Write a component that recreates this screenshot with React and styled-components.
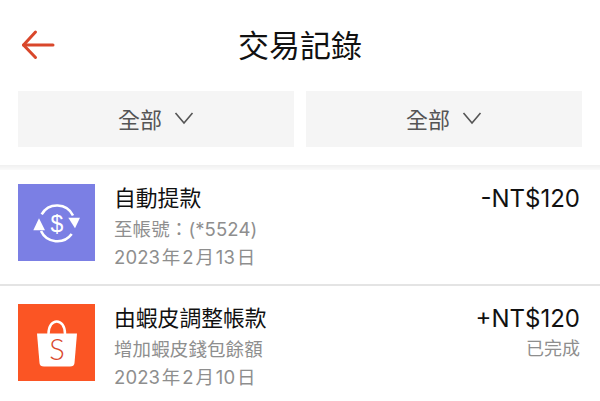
import styled, { createGlobalStyle } from "styled-components";

const GlobalStyle = createGlobalStyle`
  html, body {
    margin: 0;
    padding: 0;
    background: #fff;
  }
  body {
    width: 600px;
    height: 401px;
    overflow: hidden;
    font-family: Inter, "Noto Sans CJK TC", sans-serif;
  }
`;

const Page = styled.div`
  width: 600px;
  height: 401px;
  overflow: hidden;
  background: #fff;
`;

const Header = styled.header`
  position: relative;
  display: flex;
  align-items: center;
  justify-content: center;
  height: 91px;
`;

const BackButton = styled.button`
  position: absolute;
  left: 20px;
  top: 29px;
  display: flex;
  padding: 0;
  border: 0;
  background: none;
`;

const Title = styled.h1`
  margin: 0;
  font-size: 31px;
  line-height: 40px;
  font-weight: 400;
  color: #111;
`;

const Filters = styled.div`
  display: grid;
  grid-template-columns: 276px 276px;
  gap: 12px;
  padding: 0 18px;
`;

const Filter = styled.div`
  display: flex;
  align-items: center;
  justify-content: center;
  gap: 12px;
  height: 56px;
  padding-bottom: 3px;
  box-sizing: border-box;
  background: #f5f5f5;
  color: #555;
  font-size: 22px;
`;

const Band = styled.div`
  height: 5px;
  margin-top: 18px;
  background: linear-gradient(#f0f0f0, #fafafa);
`;

const List = styled.div`
  display: flex;
  flex-direction: column;
  gap: 4px;
`;

const Row = styled.div`
  display: flex;
  gap: 19px;
  height: 116px;
  padding: 14px 20px 0 18px;
  box-sizing: border-box;
  border-bottom: ${(props) => (props.$last ? "none" : "2px solid #e4e4e4")};
`;

const IconBox = styled.div`
  flex: none;
  display: flex;
  align-items: center;
  justify-content: center;
  width: 77px;
  height: 77px;
  background: ${(props) => props.$color};
`;

const Info = styled.div`
  flex: 1;
  display: flex;
  flex-direction: column;
`;

const RowTitle = styled.div`
  font-size: 21.8px;
  line-height: 28px;
  margin-bottom: 3px;
  color: #111;
`;

const Sub = styled.div`
  font-size: 18.5px;
  line-height: 28px;
  letter-spacing: 0.1px;
  color: #8e8e8e;
`;

const Side = styled.div`
  display: flex;
  flex-direction: column;
  align-items: flex-end;
`;

const Amount = styled.div`
  font-size: 24px;
  line-height: 30px;
  color: #111;
`;

const Status = styled.div`
  font-size: 18px;
  line-height: 30px;
  color: #8e8e8e;
`;

const Chevron = () => (
  <svg width="20" height="14" viewBox="0 0 20 14" fill="none" stroke="#555" strokeWidth="1.6">
    <path d="M1.5 2 L10 12 L18.5 2" />
  </svg>
);

const BackArrow = () => (
  <svg width="36" height="32" viewBox="0 0 36 32" fill="none" stroke="#d9472b" strokeWidth="3" strokeLinecap="round" strokeLinejoin="round">
    <path d="M3.5 16 H33" />
    <path d="M15.5 3 L3.5 16 L15.5 28.5" />
  </svg>
);

const RefundIcon = () => (
  <svg width="48" height="44" viewBox="0 0 48 44" fill="none">
    <path d="M8.7 13.3 A17.8 17.8 0 0 1 40 14.5" stroke="#fff" strokeWidth="2.6" />
    <path d="M8 30 A18 18 0 0 0 38.7 33" stroke="#fff" strokeWidth="2.6" />
    <path d="M35.3 16.7 L47 16.7 L42 27.3 Z" fill="#fff" />
    <path d="M0.3 29.3 L12 29.3 L6 17.3 Z" fill="#fff" />
    <text x="24" y="30.5" textAnchor="middle" fontFamily="Liberation Sans" fontSize="23" fill="#fff">$</text>
  </svg>
);

const BagIcon = () => (
  <svg width="42" height="50" viewBox="0 0 42 50">
    <path d="M12.5 16 C12.5 -0.7 29 -0.7 29 16" fill="none" stroke="#fff" strokeWidth="2.5" />
    <path d="M1 15.5 H41 L38.5 45 Q38.2 48.5 34 48.5 H8 Q3.8 48.5 3.5 45 Z" fill="#fff" />
    <text x="21" y="42" textAnchor="middle" fontFamily="Lato" fontWeight="300" fontSize="29" fill="#d9472b">S</text>
  </svg>
);

const transactions = [
  {
    id: 1,
    color: "#7b7fe4",
    icon: <RefundIcon />,
    title: "自動提款",
    note: "至帳號：(*5524)",
    date: "2023\u200a年\u200a2\u200a月\u200a13\u200a日",
    amount: "-NT$120",
  },
  {
    id: 2,
    color: "#fb5524",
    icon: <BagIcon />,
    title: "由蝦皮調整帳款",
    note: "增加蝦皮錢包餘額",
    date: "2023\u200a年\u200a2\u200a月\u200a10\u200a日",
    amount: "+NT$120",
    status: "已完成",
  },
];

export default function App() {
  return (
    <Page>
      <GlobalStyle />
      <Header>
        <BackButton>
          <BackArrow />
        </BackButton>
        <Title>交易記錄</Title>
      </Header>
      <Filters>
        <Filter>
          全部
          <Chevron />
        </Filter>
        <Filter>
          全部
          <Chevron />
        </Filter>
      </Filters>
      <Band />
      <List>
        {transactions.map((t, i) => (
          <Row key={t.id} $last={i === transactions.length - 1}>
            <IconBox $color={t.color}>{t.icon}</IconBox>
            <Info>
              <RowTitle>{t.title}</RowTitle>
              <Sub>{t.note}</Sub>
              <Sub>{t.date}</Sub>
            </Info>
            <Side>
              <Amount>{t.amount}</Amount>
              {t.status && <Status>{t.status}</Status>}
            </Side>
          </Row>
        ))}
      </List>
    </Page>
  );
}
